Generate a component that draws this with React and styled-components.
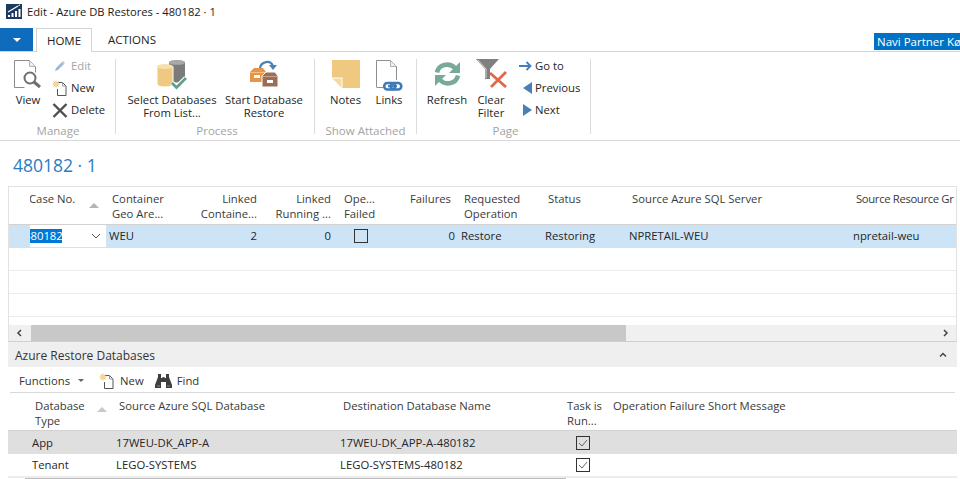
import React from "react";
import styled, { createGlobalStyle } from "styled-components";

const GlobalStyle = createGlobalStyle`
html, body { margin: 0; padding: 0; background: #fff; }
body { font-family: "Open Sans", "Noto Sans", "Liberation Sans", sans-serif; font-size: 11.3px; color: #262626; }
`;

const Page = styled.div`
width: 960px;
height: 479px;
overflow: hidden;
display: flex;
flex-direction: column;
background: #fff;
& > * {
flex: none;
}
`;

const TitleBar = styled.div`
height: 28px;
display: flex;
align-items: flex-start;
padding: 4px 0 0 6px;
gap: 5px;
box-sizing: border-box;
font-size: 11.2px;
line-height: 15px;
color: #1a1a1a;
`;

const TabStrip = styled.div`
height: 24px;
box-sizing: border-box;
border-bottom: 1px solid #d4d4d4;
display: flex;
align-items: flex-start;
`;

const MenuButton = styled.div`
width: 33px;
height: 23px;
background: #0f6cbd;
display: flex;
align-items: center;
justify-content: center;
margin-right: 3px;
&::after {
content: "";
border-left: 4px solid transparent;
border-right: 4px solid transparent;
border-top: 4px solid #fff;
}
`;

const Tab = styled.div`
height: ${(p) => (p.$active ? "24px" : "23px")};
width: ${(p) => (p.$active ? "56px" : "auto")};
padding: ${(p) => (p.$active ? "0" : "0 0 0 16px")};
box-sizing: border-box;
display: flex;
align-items: center;
justify-content: center;
font-size: 11.5px;
color: #222;
background: #fff;
${(p) => p.$active && "border: 1px solid #d4d4d4; border-bottom: none;"}
`;

const UserChip = styled.div`
margin-left: auto;
margin-top: 5px;
width: 86px;
height: 17px;
background: #0072c6;
color: #fff;
font-size: 11.5px;
line-height: 17px;
padding-left: 3px;
box-sizing: border-box;
white-space: nowrap;
overflow: hidden;
`;

const Ribbon = styled.div`
height: 89px;
box-sizing: border-box;
border-bottom: 1px solid #d9d9d9;
display: flex;
padding: 7px 0 0 8px;
`;

const Group = styled.div`
width: ${(p) => p.$w}px;
height: 75px;
box-sizing: border-box;
border-right: 1px solid #dcdcdc;
display: flex;
flex-direction: column;
`;

const GroupBody = styled.div`
height: 65px;
flex: none;
display: flex;
align-items: flex-start;
padding-left: ${(p) => p.$pad || 0}px;
`;

const GroupLabel = styled.div`
flex: none;
text-align: center;
color: #a3a3a3;
font-size: 11.5px;
line-height: 14px;
margin-bottom: -4px;
padding-left: ${(p) => p.$pl || 0}px;
padding-right: ${(p) => p.$pr || 0}px;
`;

const LargeAction = styled.div`
width: ${(p) => p.$w}px;
display: flex;
flex-direction: column;
align-items: center;
text-align: center;
line-height: 13px;
color: #262626;
white-space: nowrap;
`;

const IconSlot = styled.div`
height: 34px;
box-sizing: border-box;
padding-top: ${(p) => p.$top ?? 1}px;
display: flex;
align-items: flex-start;
justify-content: center;
`;

const SmallStack = styled.div`
display: flex;
flex-direction: column;
gap: 6px;
margin-top: -1px;
margin-left: ${(p) => p.$ml || 0}px;
`;

const SmallAction = styled.div`
height: 16px;
display: flex;
align-items: center;
gap: 2px;
line-height: 16px;
white-space: nowrap;
color: ${(p) => (p.$off ? "#a6a6a6" : "#262626")};
`;

const SmallIcon = styled.span`
width: 18px;
display: inline-flex;
justify-content: center;
`;

const PageTitle = styled.div`
height: 45px;
box-sizing: border-box;
padding: 12px 0 0 13px;
font-size: 17.5px;
line-height: 24px;
color: #2b7cc5;
`;

const MainPanel = styled.div`
height: 156px;
margin: 0 3px 0 8px;
box-sizing: border-box;
border: 1px solid #e2e2e2;
border-bottom: 1px solid #cfcfcf;
overflow: hidden;
display: flex;
flex-direction: column;
`;

const mainCols = "21px 76px 80px 74px 74px 66px 58px 84px 84px 224px 200px";
const subCols = "21px 84px 224px 224px 46px 400px";

const HeadRow = styled.div`
display: grid;
grid-template-columns: ${(p) => p.$cols};
height: 38px;
flex: none;
box-sizing: border-box;
border-bottom: 1px solid #d2d2d2;
padding-top: ${(p) => p.$pt}px;
line-height: 15px;
color: #3a3a3a;
`;

const HeadCell = styled.div`
padding: 0 ${(p) => p.$rp ?? 3}px 0 ${(p) => p.$lp ?? 6}px;
text-align: ${(p) => (p.$right ? "right" : "left")};
letter-spacing: ${(p) => p.$ls || 0}px;
white-space: pre;
overflow: hidden;
position: relative;
`;

const ClippedHead = styled(HeadCell)`
padding-left: 0;
text-indent: -1px;
`;

const SortArrow = styled.span`
position: absolute;
right: ${(p) => p.$r}px;
top: ${(p) => p.$t}px;
border-left: 5px solid transparent;
border-right: 5px solid transparent;
border-bottom: 5px solid ${(p) => p.$c || "#b5b5b5"};
`;

const Row = styled.div`
display: grid;
grid-template-columns: ${(p) => p.$cols};
height: 23px;
flex: none;
box-sizing: border-box;
align-items: center;
padding-top: ${(p) => p.$pt || 0}px;
background: ${(p) => p.$bg || "#fff"};
border-bottom: 1px solid ${(p) => (p.$bg ? "transparent" : "#ececec")};
line-height: 16px;
color: #262626;
`;

const Cell = styled.div`
padding: 0 3px;
white-space: nowrap;
overflow: hidden;
text-align: ${(p) => (p.$right ? "right" : "left")};
`;

const CaseCell = styled.div`
height: 100%;
background: #fff;
display: flex;
align-items: center;
justify-content: space-between;
overflow: hidden;
padding-right: 5px;
`;

const Selected = styled.span`
background: #0078d7;
color: #fff;
display: block;
width: 32px;
height: 14px;
line-height: 14px;
text-indent: -6px;
white-space: nowrap;
overflow: hidden;
`;

const CheckBox = styled.div`
width: 12px;
height: 12px;
border: 1px solid #333;
background: transparent;
margin-left: ${(p) => p.$ml}px;
display: flex;
`;

const Spacer = styled.div`
flex: 1;
`;

const ScrollBar = styled.div`
height: 16px;
flex: none;
background: #f0f0f0;
display: flex;
align-items: stretch;
`;

const ScrollEnd = styled.div`
width: 22px;
display: flex;
align-items: center;
justify-content: center;
`;

const ScrollThumb = styled.div`
width: 595px;
background: #c8c8c8;
`;

const FactHead = styled.div`
height: 25px;
box-sizing: border-box;
margin: 0 3px 0 8px;
background: #efefef;
display: flex;
align-items: center;
justify-content: space-between;
padding: 1px 10px 0 7px;
font-size: 12px;
color: #333;
`;

const Toolbar = styled.div`
height: 26px;
box-sizing: border-box;
margin: 0 5px 0 10px;
border-bottom: 1px solid #d9d9d9;
display: flex;
align-items: center;
padding: 2px 0 0 9px;
color: #333;
`;

const ToolItem = styled.div`
display: flex;
align-items: center;
gap: ${(p) => p.$gap || 5}px;
margin-left: ${(p) => p.$ml || 0}px;
white-space: nowrap;
`;

const DownCaret = styled.span`
border-left: 3px solid transparent;
border-right: 3px solid transparent;
border-top: 3px solid #666;
margin-left: 3px;
`;

const SubPanel = styled.div`
margin: 0 3px 0 8px;
display: flex;
flex-direction: column;
`;

const BottomLine = styled.div`
height: 2px;
border-top: 1px solid #ececec;
position: relative;
&::after {
content: "";
position: absolute;
left: 17px;
width: 541px;
top: 0;
height: 2px;
background: #bdbdbd;
}
`;

const AppIcon = () => (
  <svg width="16" height="15" viewBox="0 0 16 15">
    <rect width="16" height="15" fill="#1c3a60" />
    <path d="M2 13v-2h2v2zM5.500 13V9h2v4zM9 13V7h2v6zM12.500 13V5h2v8z" fill="#fff" />
    <path d="M2 8l5-3 5-3M12.500 1.500L14 1" stroke="#fff" strokeWidth="1.200" fill="none" />
  </svg>
);

const ViewIcon = () => (
  <svg width="28" height="29" viewBox="0 0 28 29">
    <path d="M0.500 0.500h15l6 6v6M0.500 0.500v27h10" stroke="#8c8c8c" fill="none" />
    <path d="M15.500 0.500v6h6z" stroke="#b5b5b5" fill="#ededed" />
    <circle cx="16" cy="18" r="5.500" stroke="#6f6f6f" strokeWidth="2" fill="#fff" />
    <path d="M20 22l6 5" stroke="#6f6f6f" strokeWidth="3" />
  </svg>
);

const EditIcon = () => (
  <svg width="12" height="12" viewBox="0 0 12 12">
    <path d="M1 11l1-3 6-6 2 2-6 6z" fill="#9db9d6" />
    <path d="M8.500 1.500l2 2" stroke="#b9c8d8" strokeWidth="1.500" />
  </svg>
);

const NewIcon = () => (
  <svg width="16" height="16" viewBox="0 0 16 16">
    <path d="M6.500 2.500h4l3.500 3.500v9.500H5.500V9" fill="#fff" stroke="#555" />
    <path d="M10.500 2.500v3.500h3.500" fill="none" stroke="#999" />
    <path d="M4 0.500v7M0.500 4h7M1.500 1.500l5 5M6.500 1.500l-5 5" stroke="#eebc56" />
    <circle cx="4" cy="4" r="1.500" fill="#f5d68d" />
  </svg>
);

const DeleteIcon = () => (
  <svg width="16" height="15" viewBox="0 0 16 15">
    <path d="M1.500 1l13 13M14.500 1l-13 13" stroke="#4f4f4f" strokeWidth="2.400" />
  </svg>
);

const SelectDbIcon = () => (
  <svg width="31" height="30" viewBox="0 0 31 30">
    <path d="M12 2.500C12-0.500 28-0.500 28 2.500V20c0 2.500-8 3-16 2z" fill="#7b7b7b" />
    <ellipse cx="20" cy="2.500" rx="8" ry="2.300" fill="#a8a8a8" />
    <path d="M0 6.500V24c0 4 16 4 16 0V6.500z" fill="#efc97f" stroke="#fff" strokeWidth="1" />
    <ellipse cx="8" cy="6.500" rx="8" ry="2.600" fill="#f6e1ae" />
    <path d="M15 23l4.500 4.500L29 18" stroke="#fff" strokeWidth="5" fill="none" />
    <path d="M15 23l4.500 4.500L29 18" stroke="#5f9f8f" strokeWidth="2.800" fill="none" />
  </svg>
);

const RestoreIcon = () => (
  <svg width="28" height="28" viewBox="0 0 28 28">
    <path d="M10 9C11 3 20 0 23 7" stroke="#4a82b8" strokeWidth="2.200" fill="none" />
    <path d="M19 6h8l-4 5z" fill="#4a82b8" />
    <path d="M4 9h9l3 4v10H0V13z" fill="#e89547" />
    <path d="M0 13.500h16" stroke="#f3c08e" />
    <rect x="4" y="16" width="6" height="3" fill="#fff" />
    <path d="M16 13h9l3 4v11H12V17z" fill="#9a6f55" stroke="#fff" strokeWidth="1" />
    <path d="M13 17.500h15" stroke="#c9a58f" />
    <rect x="17" y="21" width="6" height="3" fill="#fff" />
  </svg>
);

const NotesIcon = () => (
  <svg width="28" height="28" viewBox="0 0 28 28">
    <path d="M0 0h28v28H10L0 18z" fill="#efc97f" />
    <path d="M0 17.500h10.500V28H10L0 18z" fill="#fff" />
    <path d="M0.500 18.500h9v9z" fill="#f3d9a3" />
  </svg>
);

const LinksIcon = () => (
  <svg width="27" height="31" viewBox="0 0 27 31">
    <path d="M0.500 27V0.500h14l6 6V20M0.500 27.500h7" stroke="#8e8e8e" fill="none" />
    <path d="M14.500 0.500v6h6z" stroke="#adadad" fill="#f2f2f2" />
    <rect x="8.200" y="23" width="11" height="6.500" rx="3.200" stroke="#3d7ab8" strokeWidth="2.600" fill="#fff" />
    <rect x="14.800" y="23" width="10.500" height="6.500" rx="3.200" stroke="#3d7ab8" strokeWidth="2.600" fill="none" />
    <path d="M12 26.200h9" stroke="#3d7ab8" strokeWidth="2.200" />
  </svg>
);

const RefreshIcon = () => (
  <svg width="27" height="26" viewBox="0 0 27 26">
    <path d="M3 11.500C4.500 3.500 15 1 21 7" stroke="#78aa97" strokeWidth="4.500" fill="none" />
    <path d="M26 1v11H15z" fill="#78aa97" />
    <path d="M24 14.500C22.500 22.500 12 25 6 19" stroke="#78aa97" strokeWidth="4.500" fill="none" />
    <path d="M1 25V14h11z" fill="#78aa97" />
  </svg>
);

const ClearFilterIcon = () => (
  <svg width="31" height="29" viewBox="0 0 31 29">
    <path d="M0 0h23L14 10v10H9V10z" fill="#808080" />
    <path d="M2 1l8 9v9" stroke="#d6d6d6" fill="none" />
    <path d="M14 14l16 14M30 13L15 28" stroke="#e0674a" strokeWidth="2.800" />
  </svg>
);

const GoToIcon = () => (
  <svg width="18" height="10" viewBox="0 0 18 10">
    <path d="M4 5h11M11.500 1l4 4-4 4" stroke="#3f7fbf" strokeWidth="1.800" fill="none" />
  </svg>
);

const Triangle = ({ left }) => (
  <svg width="18" height="12" viewBox="0 0 18 12">
    <path d={left ? "M17 0v12L8 6z" : "M8 0v12l9-6z"} fill="#4a7fb5" />
  </svg>
);

const Binoculars = () => (
  <svg width="17" height="14" viewBox="0 0 17 14">
    <path d="M3 0h3v4h1.500V3h2v1H11V0h3v3l3 8v3h-6V8H6v6H0v-3l3-8z" fill="#3e3e3e" />
    <path d="M2 12h3M12 12h3" stroke="#8a8a8a" />
  </svg>
);

const Chevron = ({ d, w = 8, h = 8, c = "#444", sw = 1.5 }) => (
  <svg width={w} height={h} viewBox={`0 0 ${w} ${h}`}>
    <path d={d} stroke={c} strokeWidth={sw} fill="none" />
  </svg>
);

const Tick = () => (
  <svg width="12" height="12" viewBox="0 0 12 12">
    <path d="M2 6l3 3 5-6" stroke="#666" fill="none" />
  </svg>
);

export default function App() {
  return (
    <Page>
      <GlobalStyle />
      <TitleBar>
        <AppIcon />
        <span>Edit - Azure DB Restores - 480182 · 1</span>
      </TitleBar>
      <TabStrip>
        <MenuButton />
        <Tab $active>HOME</Tab>
        <Tab>ACTIONS</Tab>
        <UserChip>Navi Partner Kø</UserChip>
      </TabStrip>
      <Ribbon>
        <Group $w={108}>
          <GroupBody>
            <LargeAction $w={40}>
              <IconSlot><ViewIcon /></IconSlot>
              View
            </LargeAction>
            <SmallStack $ml={3}>
              <SmallAction $off><SmallIcon><EditIcon /></SmallIcon>Edit</SmallAction>
              <SmallAction><SmallIcon><NewIcon /></SmallIcon>New</SmallAction>
              <SmallAction><SmallIcon><DeleteIcon /></SmallIcon>Delete</SmallAction>
            </SmallStack>
          </GroupBody>
          <GroupLabel $pr={7}>Manage</GroupLabel>
        </Group>
        <Group $w={199}>
          <GroupBody $pad={8}>
            <LargeAction $w={96}>
              <IconSlot><SelectDbIcon /></IconSlot>
              Select Databases
              <br />
              From List...
            </LargeAction>
            <LargeAction $w={88}>
              <IconSlot $top={0}><RestoreIcon /></IconSlot>
              Start Database
              <br />
              Restore
            </LargeAction>
          </GroupBody>
          <GroupLabel $pl={4}>Process</GroupLabel>
        </Group>
        <Group $w={102}>
          <GroupBody $pad={7}>
            <LargeAction $w={47}>
              <IconSlot><NotesIcon /></IconSlot>
              Notes
            </LargeAction>
            <LargeAction $w={40}>
              <IconSlot><LinksIcon /></IconSlot>
              Links
            </LargeAction>
          </GroupBody>
          <GroupLabel>Show Attached</GroupLabel>
        </Group>
        <Group $w={174}>
          <GroupBody $pad={8}>
            <LargeAction $w={44}>
              <IconSlot $top={2}><RefreshIcon /></IconSlot>
              Refresh
            </LargeAction>
            <LargeAction $w={44}>
              <IconSlot $top={0}><ClearFilterIcon /></IconSlot>
              Clear
              <br />
              Filter
            </LargeAction>
            <SmallStack $ml={2}>
              <SmallAction><SmallIcon><GoToIcon /></SmallIcon>Go to</SmallAction>
              <SmallAction><SmallIcon><Triangle left /></SmallIcon>Previous</SmallAction>
              <SmallAction><SmallIcon><Triangle /></SmallIcon>Next</SmallAction>
            </SmallStack>
          </GroupBody>
          <GroupLabel $pl={4}>Page</GroupLabel>
        </Group>
      </Ribbon>
      <PageTitle>480182 · 1</PageTitle>
      <MainPanel>
        <HeadRow $cols={mainCols} $pt={4}>
          <span />
          <ClippedHead>
            Case No.
            <SortArrow $r={7} $t={12} />
          </ClippedHead>
          <HeadCell>{"Container\nGeo Are..."}</HeadCell>
          <HeadCell $right>{"Linked\nContaine..."}</HeadCell>
          <HeadCell $right>{"Linked\nRunning ..."}</HeadCell>
          <HeadCell $lp={10}>{"Ope...\nFailed"}</HeadCell>
          <HeadCell $right $rp={7}>Failures</HeadCell>
          <HeadCell>{"Requested\nOperation"}</HeadCell>
          <HeadCell>Status</HeadCell>
          <HeadCell>Source Azure SQL Server</HeadCell>
          <HeadCell $ls={-0.35}>Source Resource Gr</HeadCell>
        </HeadRow>
        <Row $cols={mainCols} $bg="#cde4f6">
          <span />
          <CaseCell>
            <Selected>480182</Selected>
            <Chevron d="M1 1l4 4 4-4" w={10} h={6} c="#555" sw={1} />
          </CaseCell>
          <Cell>WEU</Cell>
          <Cell $right>2</Cell>
          <Cell $right>0</Cell>
          <Cell><CheckBox $ml={17} /></Cell>
          <Cell $right>0</Cell>
          <Cell>Restore</Cell>
          <Cell>Restoring</Cell>
          <Cell>NPRETAIL-WEU</Cell>
          <Cell>npretail-weu</Cell>
        </Row>
        <Row $cols={mainCols} />
        <Row $cols={mainCols} />
        <Row $cols={mainCols} />
        <Spacer />
        <ScrollBar>
          <ScrollEnd><Chevron d="M5 1L2 4l3 3" /></ScrollEnd>
          <ScrollThumb />
          <Spacer />
          <ScrollEnd><Chevron d="M3 1l3 3-3 3" /></ScrollEnd>
        </ScrollBar>
      </MainPanel>
      <FactHead>
        Azure Restore Databases
        <Chevron d="M1 5.500l3-3 3 3" />
      </FactHead>
      <Toolbar>
        <ToolItem>Functions<DownCaret /></ToolItem>
        <ToolItem $ml={15}><NewIcon />New</ToolItem>
        <ToolItem $ml={11}><Binoculars />Find</ToolItem>
      </Toolbar>
      <SubPanel>
        <HeadRow $cols={subCols} $pt={5}>
          <span />
          <HeadCell>
            {"Database\nType"}
            <SortArrow $r={6} $t={9} $c="#c8c8c8" />
          </HeadCell>
          <HeadCell>Source Azure SQL Database</HeadCell>
          <HeadCell>Destination Database Name</HeadCell>
          <HeadCell>{"Task is\nRun..."}</HeadCell>
          <HeadCell>Operation Failure Short Message</HeadCell>
        </HeadRow>
        <Row $cols={subCols} $bg="#dfdfdf" $pt={1}>
          <span />
          <Cell>App</Cell>
          <Cell>17WEU-DK_APP-A</Cell>
          <Cell>17WEU-DK_APP-A-480182</Cell>
          <Cell><CheckBox $ml={12}><Tick /></CheckBox></Cell>
          <span />
        </Row>
        <Row $cols={subCols}>
          <span />
          <Cell>Tenant</Cell>
          <Cell>LEGO-SYSTEMS</Cell>
          <Cell>LEGO-SYSTEMS-480182</Cell>
          <Cell><CheckBox $ml={12}><Tick /></CheckBox></Cell>
          <span />
        </Row>
        <BottomLine />
      </SubPanel>
    </Page>
  );
}
